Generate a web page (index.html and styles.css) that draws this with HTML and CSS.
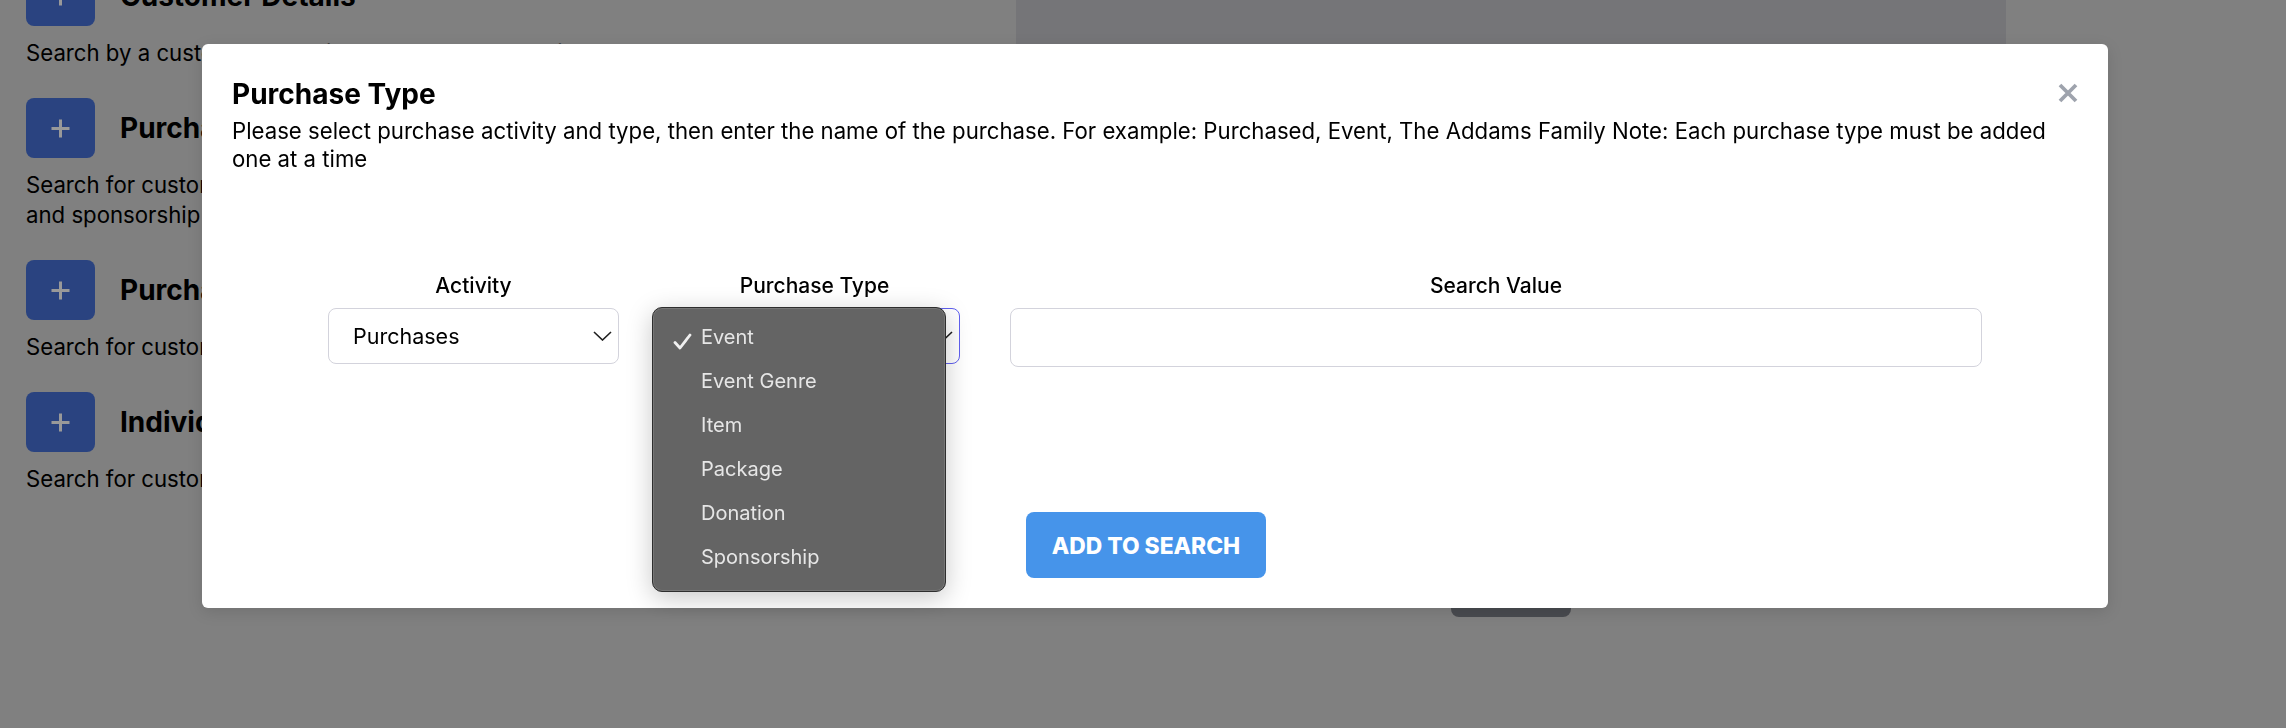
FILE: index.html
```html
<!DOCTYPE html>
<html lang="en">
<head>
<meta charset="utf-8">
<title>Purchase Type</title>
<link rel="stylesheet" href="styles.css">
</head>
<body>
<div class="page">
  <div class="options">
    <div class="option">
      <div class="option-head">
        <span class="plus-btn"><svg width="21" height="21" viewBox="0 0 21 21"><path d="M10.5 1.5v18M1.5 10.5h18" stroke="#fff" stroke-width="3" fill="none"/></svg></span>
        <h3>Customer Details</h3>
      </div>
      <p>Search by a customer's details such as name, email address or phone number</p>
    </div>
    <div class="option">
      <div class="option-head">
        <span class="plus-btn"><svg width="21" height="21" viewBox="0 0 21 21"><path d="M10.5 1.5v18M1.5 10.5h18" stroke="#fff" stroke-width="3" fill="none"/></svg></span>
        <h3>Purchase Type</h3>
      </div>
      <p>Search for customers by purchases such as events, items, packages, donations<br>and sponsorship</p>
    </div>
    <div class="option">
      <div class="option-head">
        <span class="plus-btn"><svg width="21" height="21" viewBox="0 0 21 21"><path d="M10.5 1.5v18M1.5 10.5h18" stroke="#fff" stroke-width="3" fill="none"/></svg></span>
        <h3>Purchase History</h3>
      </div>
      <p>Search for customers by the date and amount of their purchases</p>
    </div>
    <div class="option">
      <div class="option-head">
        <span class="plus-btn"><svg width="21" height="21" viewBox="0 0 21 21"><path d="M10.5 1.5v18M1.5 10.5h18" stroke="#fff" stroke-width="3" fill="none"/></svg></span>
        <h3>Individual Customer</h3>
      </div>
      <p>Search for customers by an individual customer record</p>
    </div>
  </div>
  <aside class="panel">
    <div class="panel-card"></div>
    <button class="panel-btn" type="button" aria-label="Search"></button>
  </aside>
</div>

<div class="overlay"></div>

<div class="modal">
  <button class="modal-close" type="button" aria-label="Close">
    <svg width="20" height="20" viewBox="0 0 20 20"><path d="M2 2L18 18M18 2L2 18" stroke="#9ea3ad" stroke-width="3.8" fill="none"/></svg>
  </button>
  <h2 class="modal-title">Purchase Type</h2>
  <p class="modal-desc">Please select purchase activity and type, then enter the name of the purchase. For example: Purchased, Event, The Addams Family Note: Each purchase type must be added one at a time</p>

  <div class="fields">
    <div class="field field-select">
      <label class="field-label">Activity</label>
      <div class="select">
        <span>Purchases</span>
        <svg class="chev" width="19" height="10" viewBox="0 0 19 10"><path d="M1 1L9.5 9L18 1" stroke="#1f1f1f" stroke-width="1.6" fill="none"/></svg>
      </div>
    </div>
    <div class="field field-select">
      <label class="field-label">Purchase Type</label>
      <div class="select select-focus">
        <span>Event</span>
        <svg class="chev" width="19" height="10" viewBox="0 0 19 10"><path d="M1 1L9.5 9L18 1" stroke="#1f1f1f" stroke-width="1.6" fill="none"/></svg>
      </div>
    </div>
    <div class="field field-input">
      <label class="field-label">Search Value</label>
      <input class="text-input" type="text">
    </div>
  </div>

  <div class="actions">
    <button class="add-btn" type="button">ADD TO SEARCH</button>
  </div>
</div>

<div class="menu">
  <div class="menu-item"><svg class="check" width="19" height="17" viewBox="0 0 19 17"><path d="M2 9.5L7 15L17 2" stroke="#f0f0f0" stroke-width="2.8" fill="none" stroke-linecap="round" stroke-linejoin="round"/></svg><span>Event</span></div>
  <div class="menu-item"><span class="check"></span><span>Event Genre</span></div>
  <div class="menu-item"><span class="check"></span><span>Item</span></div>
  <div class="menu-item"><span class="check"></span><span>Package</span></div>
  <div class="menu-item"><span class="check"></span><span>Donation</span></div>
  <div class="menu-item"><span class="check"></span><span>Sponsorship</span></div>
</div>
</body>
</html>
```

FILE: styles.css
```css
html, body {
  margin: 0;
  padding: 0;
}
body {
  width: 2286px;
  height: 728px;
  overflow: hidden;
  position: relative;
  background: #d5d5d5;
  font-family: Inter, "Open Sans", sans-serif;
  color: #000;
}

/* underlying page */
.page {
  display: flex;
  gap: 40px;
  padding: 0 280px 0 26px;
  height: 728px;
  box-sizing: border-box;
}
.options {
  flex: 1;
  margin-top: -34px;
}
.option {
  margin-bottom: 30px;
}
.option-head {
  display: flex;
  align-items: center;
  gap: 25px;
}
.plus-btn {
  width: 69px;
  height: 60px;
  border-radius: 8px;
  background: #4671d5;
  display: flex;
  align-items: center;
  justify-content: center;
  flex: none;
}
.option h3 {
  margin: 0;
  font-size: 28px;
  font-weight: 700;
  line-height: 34px;
  white-space: nowrap;
}
.option p {
  margin: 12px 0 0;
  font-size: 22.2px;
  line-height: 30px;
  white-space: nowrap;
}
.panel {
  width: 990px;
  flex: none;
  display: flex;
  flex-direction: column;
  align-items: center;
}
.panel-card {
  align-self: stretch;
  height: 560px;
  background: #c3c3c8;
  border-radius: 0 0 8px 8px;
}
.panel-btn {
  margin-top: 17px;
  width: 120px;
  height: 40px;
  border: 0;
  border-radius: 8px;
  background: #7b7d85;
}

.overlay {
  position: fixed;
  inset: 0;
  background: rgba(0, 0, 0, 0.4);
}

/* modal */
.modal {
  position: absolute;
  left: 202px;
  top: 44px;
  width: 1906px;
  box-sizing: border-box;
  padding: 33px 30px 30px;
  background: #fff;
  border-radius: 6px;
  box-shadow: 0 4px 16px rgba(0, 0, 0, 0.12);
}
.modal-close {
  position: absolute;
  right: 30px;
  top: 39px;
  width: 20px;
  height: 20px;
  padding: 0;
  border: 0;
  background: none;
  display: block;
}
.modal-close svg {
  display: block;
}
.modal-title {
  margin: 0 0 6px;
  font-size: 28px;
  line-height: 34px;
  font-weight: 700;
}
.modal-desc {
  margin: 0;
  font-size: 22.2px;
  line-height: 28px;
}

.fields {
  margin-top: 99px;
  display: flex;
  justify-content: center;
  align-items: flex-start;
  gap: 50px;
}
.field {
  display: flex;
  flex-direction: column;
  align-items: center;
  gap: 8px;
}
.field-select {
  width: 291px;
}
.field-input {
  width: 972px;
}
.field-label {
  font-size: 21px;
  line-height: 28px;
  font-weight: 500;
}
.select {
  align-self: stretch;
  height: 56px;
  box-sizing: border-box;
  border: 1px solid #d3d3dc;
  border-radius: 8px;
  display: flex;
  align-items: center;
  justify-content: space-between;
  padding: 0 6px 0 24px;
  font-size: 21.5px;
}
.select-focus {
  border-color: #6161f0;
}
.chev {
  display: block;
}
.text-input {
  align-self: stretch;
  height: 59px;
  box-sizing: border-box;
  border: 1px solid #d3d3dc;
  border-radius: 8px;
  font: inherit;
  padding: 0 20px;
  margin: 0;
  outline: none;
}

.actions {
  margin-top: 145px;
  display: flex;
  justify-content: center;
  padding-right: 18px;
}
.add-btn {
  width: 240px;
  height: 66px;
  border: 0;
  border-radius: 8px;
  background: #4694ea;
  color: #fff;
  font-family: inherit;
  font-size: 22.8px;
  font-weight: 800;
  padding: 0;
}

/* native popup menu */
.menu {
  position: absolute;
  left: 652px;
  top: 307px;
  width: 294px;
  height: 285px;
  box-sizing: border-box;
  padding-top: 7px;
  background: #646464;
  border: 1px solid #2e2e2e;
  border-radius: 10px;
  box-shadow: inset 0 0 0 1px rgba(255, 255, 255, 0.12), 0 6px 26px rgba(0, 0, 0, 0.22);
}
.menu-item {
  height: 44px;
  display: flex;
  align-items: center;
  padding-left: 20px;
  font-size: 20px;
  color: #e6e6e6;
}
.check {
  width: 19px;
  height: 17px;
  margin-right: 9px;
  margin-top: 8px;
  flex: none;
}
```
